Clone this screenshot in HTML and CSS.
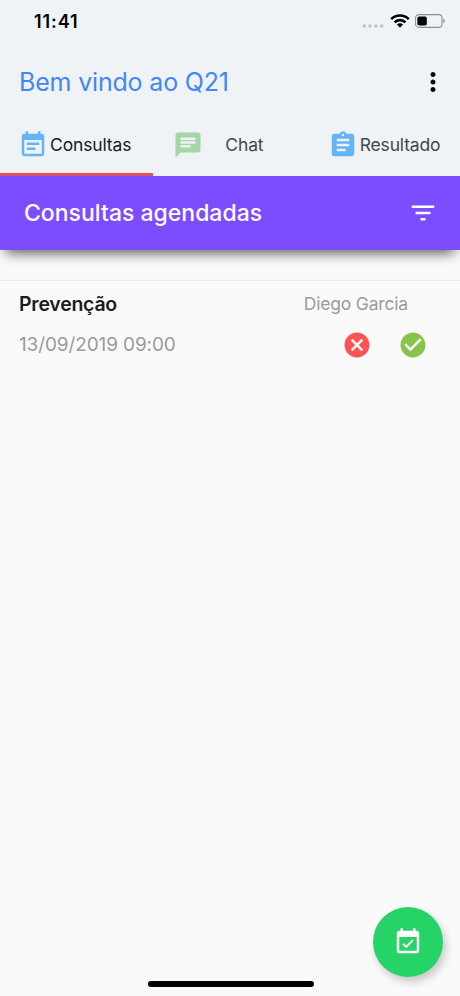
FILE: index.html
```html
<!DOCTYPE html>
<html lang="pt-BR">
<head>
  <meta charset="UTF-8">
  <title>Q21</title>
  <meta name="viewport" content="width=device-width, initial-scale=1.0">
  <link rel="stylesheet" href="styles.css">
</head>
<body>

  <header class="header">
    <div class="statusbar">
      <span class="time">11:41</span>
      <div class="status-icons">
        <svg class="signal" width="22" height="4" viewBox="0 0 22 4">
          <circle cx="2.2" cy="2" r="1.8"/><circle cx="8" cy="2" r="1.8"/><circle cx="13.8" cy="2" r="1.8"/><circle cx="19.6" cy="2" r="1.8"/>
        </svg>
        <svg class="wifi" width="20" height="14" viewBox="0 0 20 14">
          <path d="M1.2 5.1a12.4 12.4 0 0 1 17.6 0M4.5 8.4a7.8 7.8 0 0 1 11 0" fill="none" stroke="#000" stroke-width="2.6"/>
          <path d="M10 13.7l-3.1-3.1a4.4 4.4 0 0 1 6.2 0z"/>
        </svg>
        <svg class="battery" width="31" height="14" viewBox="0 0 31 14">
          <rect x=".6" y=".6" width="26.4" height="12.8" rx="3.2" fill="none" stroke="#8d9092" stroke-width="1.1"/>
          <rect x="2.4" y="2.4" width="9.4" height="9.2" rx="1.8"/>
          <path d="M28.3 4.8c2 .7 2 3.7 0 4.4z" fill="#8d9092"/>
        </svg>
      </div>
    </div>

    <div class="topbar">
      <h1>Bem vindo ao Q21</h1>
      <svg class="icon" viewBox="0 0 24 24"><path d="M12 8c1.1 0 2-.9 2-2s-.9-2-2-2-2 .9-2 2 .9 2 2 2zm0 2c-1.1 0-2 .9-2 2s.9 2 2 2 2-.9 2-2-.9-2-2-2zm0 6c-1.1 0-2 .9-2 2s.9 2 2 2 2-.9 2-2-.9-2-2-2z"/></svg>
    </div>

    <nav class="tabs">
      <div class="tab active">
        <svg class="icon blue" viewBox="0 0 24 24"><path d="M17 10H7v2h10v-2zm2-7h-1V1h-2v2H8V1H6v2H5c-1.11 0-1.99.9-1.99 2L3 19c0 1.1.89 2 2 2h14c1.1 0 2-.9 2-2V5c0-1.1-.9-2-2-2zm0 16H5V8h14v11zm-5-5H7v2h7v-2z"/></svg>
        <span>Consultas</span>
      </div>
      <div class="tab chat">
        <svg class="icon green" viewBox="0 0 24 24"><path d="M20 2H4c-1.1 0-1.99.9-1.99 2L2 22l4-4h14c1.1 0 2-.9 2-2V4c0-1.1-.9-2-2-2zM6 9h12v2H6V9zm8 5H6v-2h8v2zm4-6H6V6h12v2z"/></svg>
        <span>Chat</span>
      </div>
      <div class="tab result">
        <svg class="icon blue" viewBox="0 0 24 24"><path d="M19 3h-4.18C14.4 1.84 13.3 1 12 1c-1.3 0-2.4.84-2.82 2H5c-1.1 0-2 .9-2 2v14c0 1.1.9 2 2 2h14c1.1 0 2-.9 2-2V5c0-1.1-.9-2-2-2zm-7 0c.55 0 1 .45 1 1s-.45 1-1 1-1-.45-1-1 .45-1 1-1zm2 14H7v-2h7v2zm3-4H7v-2h10v2zm0-4H7V7h10v2z"/></svg>
        <span>Resultado</span>
      </div>
    </nav>
  </header>

  <div class="banner">
    <h2>Consultas agendadas</h2>
    <svg class="icon" viewBox="0 0 24 24"><path d="M10 18h4v-2h-4v2zM3 6v2h18V6H3zm3 7h12v-2H6v2z"/></svg>
  </div>

  <main class="list">
    <div class="item">
      <div class="row">
        <span class="title">Prevenção</span>
        <span class="doctor">Diego Garcia</span>
      </div>
      <div class="row">
        <span class="date">13/09/2019 09:00</span>
        <div class="actions">
          <svg class="icon cancel" viewBox="0 0 24 24"><path d="M12 2C6.47 2 2 6.47 2 12s4.47 10 10 10 10-4.47 10-10S17.53 2 12 2zm5 13.59L15.59 17 12 13.41 8.41 17 7 15.59 10.59 12 7 8.41 8.41 7 12 10.59 15.59 7 17 8.41 13.41 12 17 15.59z"/></svg>
          <svg class="icon confirm" viewBox="0 0 24 24"><path d="M12 2C6.48 2 2 6.48 2 12s4.48 10 10 10 10-4.48 10-10S17.52 2 12 2zm-2 15l-5-5 1.41-1.41L10 14.17l7.59-7.59L19 8l-9 9z"/></svg>
        </div>
      </div>
    </div>
  </main>

  <div class="fab">
    <svg class="icon" viewBox="0 0 24 24"><path d="M16.53 11.06L15.47 10l-4.88 4.88-2.12-2.12-1.06 1.06L10.59 17l5.94-5.94zM19 3h-1V1h-2v2H8V1H6v2H5c-1.11 0-1.99.9-1.99 2L3 19c0 1.1.89 2 2 2h14c1.1 0 2-.9 2-2V5c0-1.1-.9-2-2-2zm0 16H5V8h14v11z"/></svg>
  </div>
  <div class="home-bar"></div>

</body>
</html>
```
FILE: styles.css
```css
* {
  box-sizing: border-box;
}

body {
  margin: 0;
  height: 996px;
  background: #fafafa;
  font-family: Inter, "Liberation Sans", sans-serif;
  white-space: nowrap;
  overflow: hidden;
}

.icon {
  width: 30px;
  height: 30px;
  flex: none;
  display: block;
}

h1, h2 {
  margin: 0;
}

.header {
  height: 176px;
  background: #eff3f6;
}

.statusbar {
  height: 42px;
  padding: 0 14px 0 34px;
  display: flex;
  align-items: center;
  justify-content: space-between;
}

.time {
  font-size: 18px;
  font-weight: 600;
  letter-spacing: 0.9px;
}

.status-icons {
  display: flex;
  align-items: center;
}

.signal {
  fill: #bfc3c6;
  margin: 9px 6px 0 0;
}

.wifi {
  margin-right: 5px;
}

.topbar {
  height: 79px;
  padding: 0 12px 0 19px;
  display: flex;
  align-items: center;
  justify-content: space-between;
}

.topbar h1 {
  font-size: 25px;
  font-weight: 400;
  letter-spacing: -0.18px;
  color: #4287f5;
}

.tabs {
  height: 55px;
  display: grid;
  grid-template-columns: repeat(3, 1fr);
}

.tab {
  display: flex;
  align-items: center;
  padding: 0 0 8px 18px;
  font-size: 17.5px;
  letter-spacing: -0.15px;
  color: #43474a;
}

.tab span {
  margin-left: 2px;
}

.active {
  color: #16191b;
  border-bottom: 3px solid #e05260;
  padding-bottom: 5px;
}

.chat {
  padding-left: 20px;
}

.chat span {
  margin-left: 22px;
}

.result {
  padding-left: 21px;
}

.blue {
  fill: #64b5f6;
}

.green {
  fill: #a5d6a7;
}

.banner {
  height: 74px;
  padding: 0 22px 0 24px;
  display: flex;
  align-items: center;
  justify-content: space-between;
  background: #7c4dff;
  color: #fff;
  fill: #fff;
  box-shadow: 0 9px 12px -6px rgba(0,0,0,0.65);
}

.banner h2 {
  font-size: 23px;
  font-weight: 500;
}

.list {
  margin-top: 30px;
  border-top: 1px solid #ebebeb;
}

.item {
  padding: 2px 32px 0 19px;
}

.row {
  height: 41px;
  display: flex;
  align-items: center;
  justify-content: space-between;
}

.title {
  font-size: 19.5px;
  font-weight: 600;
  letter-spacing: -0.25px;
  color: #1c1c1c;
}

.doctor {
  font-size: 17.5px;
  letter-spacing: -0.18px;
  color: #9b9b9b;
  margin-right: 20px;
}

.date {
  font-size: 19px;
  letter-spacing: -0.12px;
  color: #9b9b9b;
}

.actions {
  display: flex;
  gap: 26px;
}

.cancel {
  fill: #ff5252;
}

.confirm {
  fill: #8bc34a;
}

.fab {
  position: absolute;
  right: 17px;
  bottom: 19px;
  width: 70px;
  height: 70px;
  border-radius: 50%;
  display: flex;
  align-items: center;
  justify-content: center;
  background: #25d366;
  fill: #fff;
  box-shadow: 3px 5px 9px rgba(0,0,0,0.2);
}

.home-bar {
  position: absolute;
  left: 148px;
  bottom: 9px;
  width: 166px;
  height: 6px;
  border-radius: 3px;
  background: #000;
}
```
